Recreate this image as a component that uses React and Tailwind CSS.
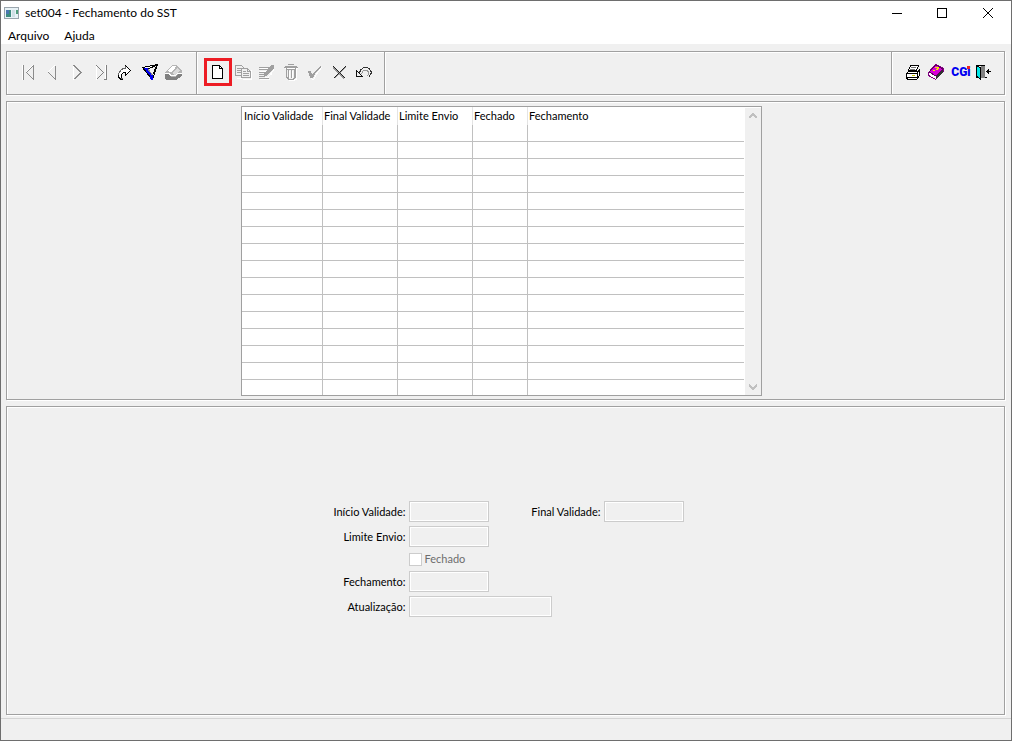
const COLUMNS = [
  { label: 'Início Validade', width: 'w-[81px]' },
  { label: 'Final Validade', width: 'w-[75px]' },
  { label: 'Limite Envio', width: 'w-[75px]' },
  { label: 'Fechado', width: 'w-[55px]' },
  { label: 'Fechamento', width: '' },
]

const ROWS = Array.from({ length: 16 }, (_, i) => i)

const PANEL = 'border border-[#a0a0a0] shadow-[1px_1px_0_#fff,inset_1px_1px_0_#fff]'

function Icon({ size = 24, children }) {
  return (
    <svg width={size} height={size} viewBox={`0 0 ${size} ${size}`} fill="none" shapeRendering="crispEdges" aria-hidden="true">
      {children}
    </svg>
  )
}

function ToolButton({ label, children }) {
  return (
    <button type="button" aria-label={label} className="h-6 w-6 shrink-0">
      <Icon>{children}</Icon>
    </button>
  )
}

function NavigationTools() {
  return (
    <div className="flex items-center w-[189px] pl-[9px] pb-0.5">
      <ToolButton label="Primeiro">
        <path d="M6.5 5v15M17.5 5.5l-7 7" stroke="#fff" />
        <path d="M7.5 5v15M10.5 12.5l7 7v-14l-7 7" stroke="#8c8c8c" />
        <path d="M16.5 5.5l-7 7" stroke="#fff" />
      </ToolButton>
      <ToolButton label="Anterior">
        <path d="M8.5 12.5l7 7v-14" stroke="#8c8c8c" />
        <path d="M14.5 5.5l-7 7" stroke="#fff" />
      </ToolButton>
      <ToolButton label="Próximo">
        <path d="M9.5 5v15" stroke="#fff" />
        <path d="M9.5 5.5l7 7-7 7M10.5 5.5l7 7-7 7" stroke="#8c8c8c" />
      </ToolButton>
      <ToolButton label="Último">
        <path d="M8.5 5v15M17.5 5v14" stroke="#fff" />
        <path d="M8.5 5.5l7 7-7 7M18.5 5v15M16 19.5h3" stroke="#808080" />
      </ToolButton>
      <ToolButton label="Ir para">
        <path d="M13.5 5.5l5 5-5 5v-3h-2l-2 2v3l1 2h-2l-2-3v-3l3-4 2-1h2z" fill="#fff" stroke="#666" />
        <path d="M13.5 5.5l5 5-5 5v-3h-2l-2 2v3M6.5 15v2l2 2h2" stroke="#000" />
      </ToolButton>
      <ToolButton label="Filtrar">
        <path d="M6.5 7.5l15-3-5 15z" fill="#fff" stroke="#000" />
        <path d="M8 8h4v3l5 5v4h-2l-3-6z" fill="#0000f0" />
        <path d="M12 9l8-3-4 10z" fill="#f0f0f0" />
        <path d="M6.5 7.5l8 10M12.5 8.5l8-3-4 10" stroke="#000" />
        <path d="M12.5 9v1l4 5" stroke="#888" />
      </ToolButton>
      <ToolButton label="Limpar filtro">
        <path d="M5 12l7-7h5l5 6v5l-6 4H6l-1-2z" fill="#b4b4b4" />
        <path d="M7 11l5-5h4l-1 2-4 4z" fill="#fff" />
        <path d="M12 13l5-5 3 3-5 4z" fill="#dcdcdc" />
        <path d="M5 13.5h4l2 2h4l3-2h4" stroke="#fff" />
        <path d="M5 14h4l2 3h4l3-3h4v2l-6 4H6l-1-2z" fill="#808080" />
      </ToolButton>
    </div>
  )
}

function EditTools() {
  return (
    <div className="flex items-center w-[188px] pl-[7px] pb-0.5 border-l border-[#a0a0a0] shadow-[inset_1px_0_0_#fff]">
      <button type="button" aria-label="Novo" className="h-7 w-7 shrink-0 border-3 border-[#ed1c24]">
        <Icon size={22}>
          <path d="M5.5 4.5h7l3 3v10h-10z" fill="#fff" stroke="#000" />
          <path d="M12.5 4v3.5H16" stroke="#000" />
        </Icon>
      </button>
      <ToolButton label="Copiar">
        <path d="M4.5 18.5h5M11 19.5h8V10" stroke="#fff" />
        <path d="M3.5 5.5h6l2 2v8h-8zM5 8.5h4M5 10.5h4M5 12.5h4" stroke="#a0a0a0" />
        <path d="M9.5 8.5h6l3 3v6h-9z" fill="#f0f0f0" stroke="#a0a0a0" />
        <path d="M15.5 8v3.5H18M11 11.5h3M11 13.5h6M11 15.5h6" stroke="#a0a0a0" />
      </ToolButton>
      <ToolButton label="Editar">
        <path d="M4 8.5h8M4 11.5h6M4 14.5h6M4 19.5h10" stroke="#fff" />
        <path d="M3 7.5h10M3 9.5h9M3 12.5h7M3 14.5h5M3 16.5h5M3 18.5h10" stroke="#a0a0a0" />
        <path d="M15 5h3v3l-6 7-4 2v-4l4-4z" fill="#a0a0a0" />
        <path d="M14 14.5h2M9 17.5h3l6-8" stroke="#fff" />
      </ToolButton>
      <ToolButton label="Excluir">
        <path d="M5 8.5h13M16.5 9v10l-2 1h-6" stroke="#fff" />
        <path d="M8 4.5h6M5 6.5h12M4 7.5h14M6.5 8v9l2 2h5l2-2V8" stroke="#a0a0a0" />
        <path d="M8.5 10v8M11.5 10v8M14.5 9v9M7 9.5h8" stroke="#a0a0a0" />
        <path d="M9.5 11v7M12.5 11v7" stroke="#fff" />
      </ToolButton>
      <ToolButton label="Confirmar">
        <path d="M5 13l3 6h2l2-4 6-8" stroke="#fff" />
        <path d="M4 11h3l1 4 6-7 3-2v1l-5 5-3 6H6z" fill="#a0a0a0" />
      </ToolButton>
      <ToolButton label="Cancelar">
        <path d="M5 7.5l11 11M17.5 7l-11 11" stroke="#999" />
        <path d="M5.5 6.5l12 12M17.5 6.5l-12 12" stroke="#222" />
      </ToolButton>
      <ToolButton label="Desfazer">
        <path d="M7 13.5l2-4 3-2h3l2 1 2 3v2l-2 3" stroke="#333" />
        <path d="M9.5 14l2-4h3l2 2v2l-1 2" stroke="#999" />
        <path d="M4.5 10v6.5H11M4.5 10.5l6 6" stroke="#111" />
      </ToolButton>
    </div>
  )
}

function SystemTools() {
  return (
    <div className="ml-auto flex items-center w-[113px] pl-[9px] pb-0.5 border-l border-[#a0a0a0] shadow-[inset_1px_0_0_#fff]">
      <ToolButton label="Imprimir">
        <path d="M9.5 5.5h8l-2 5h-8z" fill="#fff" stroke="#000" />
        <path d="M10 7.5h5M9 9.5h5" stroke="#777" />
        <path d="M7.5 11.5h10l1-2v6l-3 4h-9l-1-2v-4z" fill="#fff" stroke="#000" />
        <path d="M5 13.5h11M6 17.5h10M16.5 12v6M18 11.5h1" stroke="#000" />
        <path d="M11 15.5h3" stroke="#c8c800" />
      </ToolButton>
      <ToolButton label="Ajuda">
        <path d="M3.5 12.5l7-8 8 4v3l-8 8-7-4z" fill="#fff" stroke="#800080" />
        <path d="M4 12l7-7 7 4-7 7z" fill="#d800d8" stroke="#600060" />
        <path d="M11 18.5l7-7M11 17.5l7-7" stroke="#333" />
        <path d="M10 7h3l1 1v1l-2 1h-1V9h1V8h-2zM8 10h2v1H8z" fill="#f0f000" />
      </ToolButton>
      <button type="button" aria-label="CGi" className="relative h-6 w-6 shrink-0 font-['Liberation_Sans_Narrow','Roboto'] text-[12px] leading-6 font-black text-[#0000f0]">
        CGi
        <span className="absolute top-[6px] right-[3px] h-[3px] w-[3px] bg-[#f02020]" />
      </button>
      <ToolButton label="Sair">
        <path d="M3.5 17V5.5h8V18" stroke="#000" />
        <path d="M8 6h4v12H8z" fill="#808080" />
        <path d="M4 6l4 2v11l-4-3z" fill="#00e8e8" />
        <path d="M4.5 6l3 2v11.5l-3-3M3 17.5h3M12 17.5h2" stroke="#000" />
        <path d="M13 11.5h5M14.5 10v3M15.5 9v5" stroke="#000" />
      </ToolButton>
    </div>
  )
}

function TitleBar() {
  return (
    <header className="bg-white text-[12px] text-black">
      <div className="flex h-6 items-center pl-[3px]">
        <svg width="15" height="12" viewBox="0 0 15 12" shapeRendering="crispEdges" aria-hidden="true">
          <path d="M0 0h15v12H0z" fill="#9aa5ad" />
          <path d="M1 1h13v10H1z" fill="#e8f2f6" />
          <path d="M2 3h5v7H2z" fill="#3c8c80" />
          <path d="M2 3h3v4H2z" fill="#4a78b0" />
          <path d="M8 3h3v7H8z" fill="#cfe0e6" />
          <path d="M12 3h2v4h-2z" fill="#4f9d7c" />
        </svg>
        <h1 className="ml-1.5 leading-4">set004 - Fechamento do SST</h1>
        <div className="ml-auto flex">
          <button type="button" aria-label="Minimizar" className="flex w-[45px] justify-center">
            <Icon size={12}><path d="M1 6.5h10" stroke="#000" /></Icon>
          </button>
          <button type="button" aria-label="Maximizar" className="flex w-[46px] justify-center">
            <Icon size={12}><path d="M1.5 1.5h9v9h-9z" stroke="#000" /></Icon>
          </button>
          <button type="button" aria-label="Fechar" className="flex w-[46px] justify-center">
            <svg width="12" height="12" viewBox="0 0 12 12" aria-hidden="true">
              <path d="M1 1l10 10M11 1L1 11" stroke="#000" />
            </svg>
          </button>
        </div>
      </div>
      <nav className="flex h-[19px] items-end gap-[15px] pl-[7px] leading-4">
        <button type="button">Arquivo</button>
        <button type="button">Ajuda</button>
      </nav>
    </header>
  )
}

function ValidityTable() {
  return (
    <div className="mr-2 flex h-[290px] w-[521px] overflow-hidden border border-[#a0a0a0] bg-white">
      <div className="min-w-0 flex-1 overflow-hidden">
        <table className="w-full table-fixed border-separate border-spacing-0">
          <thead>
            <tr className="h-[18px]">
              {COLUMNS.map((col) => (
                <th
                  key={col.label}
                  className={`${col.width} h-[18px] border-r border-[#e4e4e4] p-0 pl-px text-left font-normal leading-4 whitespace-nowrap first:pl-0.5 last:border-r-0`}
                >
                  {col.label}
                </th>
              ))}
            </tr>
          </thead>
          <tbody>
            {ROWS.map((row) => (
              <tr key={row}>
                {COLUMNS.map((col) => (
                  <td key={col.label} className="h-[17px] border-r border-b border-[#c0c0c0] p-0 last:border-r-0" />
                ))}
              </tr>
            ))}
          </tbody>
        </table>
      </div>
      <div className="mt-px ml-px flex w-4 flex-col items-center justify-between bg-[#f0f0f0] py-1">
        <Icon size={8}><path d="M0 6l4-4 4 4" stroke="#c0c0c0" strokeWidth="2" /></Icon>
        <Icon size={8}><path d="M0 2l4 4 4-4" stroke="#c0c0c0" strokeWidth="2" /></Icon>
      </div>
    </div>
  )
}

function Field({ id, label, labelWidth = 'w-[77px]', width = 'w-20' }) {
  return (
    <div className="flex h-[21px] items-center">
      <label htmlFor={id} className={`${labelWidth} pr-[3px] text-right whitespace-nowrap`}>{label}</label>
      <input
        id={id}
        type="text"
        disabled
        className={`${width} h-[21px] border border-[#cccccc] bg-[#f0f0f0] px-1 shadow-[inset_0_0_0_1px_#fff]`}
      />
    </div>
  )
}

export default function App() {
  return (
    <div className="flex min-h-screen flex-col border border-[#6e6e6e] bg-[#f0f0f0] font-['Lato',sans-serif] text-[11px] leading-4 text-black">
      <TitleBar />

      <main className="flex flex-1 flex-col gap-1.5 px-[5px] pt-[7px] pr-1.5 pb-[3px]">
        <div className={`flex h-11 ${PANEL}`}>
          <NavigationTools />
          <EditTools />
          <div className="flex-1 border-l border-[#a0a0a0] shadow-[inset_1px_0_0_#fff]" />
          <SystemTools />
        </div>

        <section className={`flex justify-center pt-1 pb-[3px] ${PANEL}`}>
          <ValidityTable />
        </section>

        <section className={`flex flex-1 items-center justify-center ${PANEL}`}>
          <form className="flex flex-col gap-1 pb-[3px] pl-1">
            <div className="flex gap-10">
              <Field id="inicio" label="Início Validade:" />
              <Field id="final" label="Final Validade:" labelWidth="w-[75px]" />
            </div>
            <Field id="limite" label="Limite Envio:" />
            <div className="flex h-4 items-center gap-[3px] pl-[77px] text-[#6d6d6d]">
              <input
                id="fechado"
                type="checkbox"
                disabled
                className="h-[13px] w-[13px] appearance-none border border-[#cccccc] bg-white"
              />
              <label htmlFor="fechado">Fechado</label>
            </div>
            <Field id="fechamento" label="Fechamento:" />
            <Field id="atualizacao" label="Atualização:" width="w-[143px]" />
          </form>
        </section>
      </main>

      <footer className="h-[22px] border-t border-[#d4d4d4]" />
    </div>
  )
}
